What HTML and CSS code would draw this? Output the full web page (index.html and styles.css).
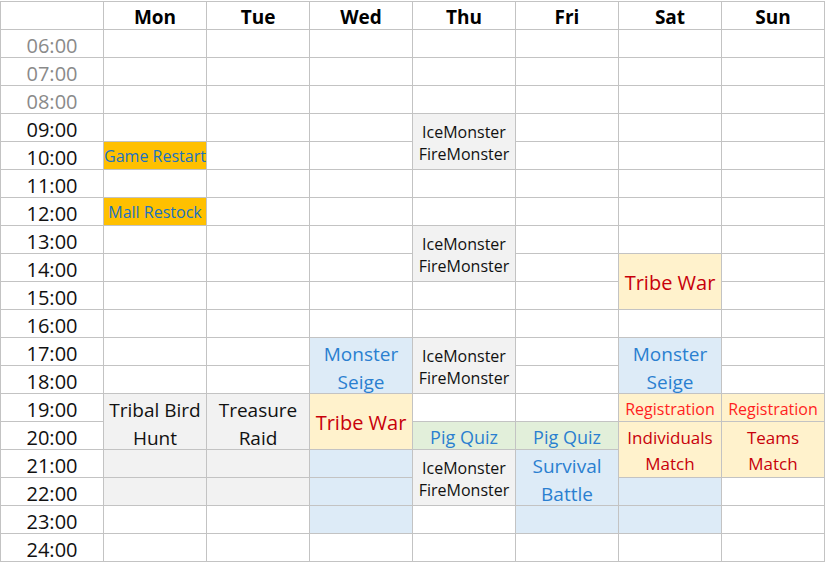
FILE: index.html
```html
<!DOCTYPE html>
<html>
<head>
<meta charset="utf-8">
<link rel="stylesheet" href="styles.css">
</head>
<body>
<div class="sheet">
  <div class="c"></div><div class="c hd">Mon</div><div class="c hd">Tue</div><div class="c hd">Wed</div><div class="c hd">Thu</div><div class="c hd">Fri</div><div class="c hd">Sat</div><div class="c hd">Sun</div>

  <div class="c tm dim">06:00</div><div class="c"></div><div class="c"></div><div class="c"></div><div class="c"></div><div class="c"></div><div class="c"></div><div class="c"></div>
  <div class="c tm dim">07:00</div><div class="c"></div><div class="c"></div><div class="c"></div><div class="c"></div><div class="c"></div><div class="c"></div><div class="c"></div>
  <div class="c tm dim">08:00</div><div class="c"></div><div class="c"></div><div class="c"></div><div class="c"></div><div class="c"></div><div class="c"></div><div class="c"></div>

  <div class="c tm">09:00</div><div class="c"></div><div class="c"></div><div class="c"></div>
  <div class="c span2 gray monster">IceMonster<br>FireMonster</div>
  <div class="c"></div><div class="c"></div><div class="c"></div>

  <div class="c tm">10:00</div><div class="c orange small">Game Restart</div><div class="c"></div><div class="c"></div><div class="c"></div><div class="c"></div><div class="c"></div>

  <div class="c tm">11:00</div><div class="c"></div><div class="c"></div><div class="c"></div><div class="c"></div><div class="c"></div><div class="c"></div><div class="c"></div>

  <div class="c tm">12:00</div><div class="c orange small">Mall Restock</div><div class="c"></div><div class="c"></div><div class="c"></div><div class="c"></div><div class="c"></div><div class="c"></div>

  <div class="c tm">13:00</div><div class="c"></div><div class="c"></div><div class="c"></div>
  <div class="c span2 gray monster">IceMonster<br>FireMonster</div>
  <div class="c"></div><div class="c"></div><div class="c"></div>

  <div class="c tm">14:00</div><div class="c"></div><div class="c"></div><div class="c"></div><div class="c"></div>
  <div class="c span2 yellow war">Tribe War</div>
  <div class="c"></div>

  <div class="c tm">15:00</div><div class="c"></div><div class="c"></div><div class="c"></div><div class="c"></div><div class="c"></div><div class="c"></div>

  <div class="c tm">16:00</div><div class="c"></div><div class="c"></div><div class="c"></div><div class="c"></div><div class="c"></div><div class="c"></div><div class="c"></div>

  <div class="c tm">17:00</div><div class="c"></div><div class="c"></div>
  <div class="c span2 blue big">Monster<br>Seige</div>
  <div class="c span2 gray monster">IceMonster<br>FireMonster</div>
  <div class="c"></div>
  <div class="c span2 blue big">Monster<br>Seige</div>
  <div class="c"></div>

  <div class="c tm">18:00</div><div class="c"></div><div class="c"></div><div class="c"></div><div class="c"></div>

  <div class="c tm">19:00</div>
  <div class="c span2 gray big dark">Tribal Bird<br>Hunt</div>
  <div class="c span2 gray big dark">Treasure<br>Raid</div>
  <div class="c span2 yellow war">Tribe War</div>
  <div class="c"></div><div class="c"></div>
  <div class="c yellow reg">Registration</div>
  <div class="c yellow reg">Registration</div>

  <div class="c tm">20:00</div>
  <div class="c green quiz">Pig Quiz</div>
  <div class="c green quiz">Pig Quiz</div>
  <div class="c span2 yellow match">Individuals<br>Match</div>
  <div class="c span2 yellow match">Teams<br>Match</div>

  <div class="c tm">21:00</div><div class="c gray"></div><div class="c gray"></div><div class="c blue"></div>
  <div class="c span2 gray monster">IceMonster<br>FireMonster</div>
  <div class="c span2 blue big">Survival<br>Battle</div>

  <div class="c tm">22:00</div><div class="c gray"></div><div class="c gray"></div><div class="c blue"></div><div class="c blue"></div><div class="c"></div>

  <div class="c tm">23:00</div><div class="c"></div><div class="c"></div><div class="c blue"></div><div class="c"></div><div class="c blue"></div><div class="c blue"></div><div class="c"></div>

  <div class="c tm">24:00</div><div class="c"></div><div class="c"></div><div class="c"></div><div class="c"></div><div class="c"></div><div class="c"></div><div class="c"></div>
</div>
</body>
</html>
```

FILE: styles.css
```css
html, body {
  margin: 0;
  padding: 0;
  background: #ffffff;
}
body {
  padding-top: 1px;
  font-family: "Open Sans", "Noto Sans", sans-serif;
  color: #000;
}
.sheet {
  display: grid;
  grid-template-columns: repeat(8, 103px);
  grid-template-rows: repeat(20, 28px);
  border-left: 1px solid #c3c3c3;
  border-top: 1px solid #c3c3c3;
  width: max-content;
}
.c {
  box-sizing: border-box;
  border-right: 1px solid #c3c3c3;
  border-bottom: 1px solid #c3c3c3;
  display: flex;
  align-items: center;
  justify-content: center;
  text-align: center;
  white-space: nowrap;
  overflow: visible;
}
.span2 {
  grid-row: span 2;
}
.hd {
  font-weight: 700;
  font-size: 19px;
  padding-top: 3px;
}
.tm {
  font-size: 20px;
  padding-top: 3px;
  color: #111;
}
.dim {
  color: #8a8a8a;
}
.gray { background: #f2f2f2; }
.blue { background: #ddebf7; }
.yellow { background: #fff2cc; }
.green { background: #e2efda; }
.orange { background: #ffc000; }

.monster {
  font-size: 16px;
  line-height: 22px;
  color: #111;
  padding-top: 2px;
}
.small {
  font-size: 16px;
  color: #1a72c2;
}
.big {
  font-size: 19px;
  line-height: 28px;
  color: #2a7fd0;
  padding-top: 4px;
}
.dark {
  color: #111;
}
.war {
  font-size: 20px;
  color: #c8000a;
  padding-top: 2px;
}
.reg {
  font-size: 16px;
  color: #ff1f1f;
  padding-top: 2px;
}
.match {
  font-size: 17px;
  line-height: 26px;
  color: #c8000a;
  padding-top: 3px;
}
.quiz {
  font-size: 18px;
  color: #2a7fd0;
  padding-top: 2px;
}
```
